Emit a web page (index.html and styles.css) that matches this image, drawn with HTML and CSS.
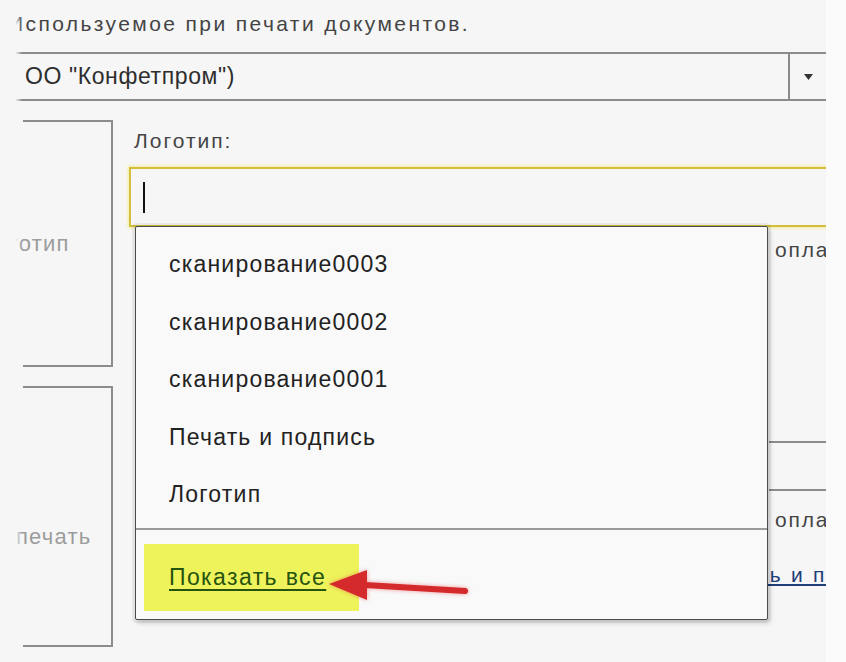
FILE: index.html
```html
<!DOCTYPE html>
<html lang="ru">
<head>
    <meta charset="UTF-8">
    <meta name="viewport" content="width=device-width, initial-scale=1.0">
    <title>Логотип</title>
    <link rel="stylesheet" href="styles.css">
</head>
<body>

    <div class="screen">
        <p class="caption">Используемое при печати документов.</p>

        <div class="select">
            <span class="select-value">ОО "Конфетпром")</span>
            <span class="select-btn">
                <svg width="9" height="6" viewBox="0 0 9 6"><path d="M0 0h9L4.5 6z" fill="#333"/></svg>
            </span>
        </div>

        <div class="main">
            <div class="side">
                <div class="slot slot-logo"><span>Логотип</span></div>
                <div class="slot slot-stamp"><span>печать</span></div>
            </div>

            <div class="form">
                <div class="label">Логотип:</div>
                <div class="field field-active"><span class="caret"></span></div>

                <div class="row row-first">оплаты</div>
                <div class="field field-plain"></div>
                <div class="row">оплаты</div>
                <div class="row row-link"><a href="#">Печать и подпись</a></div>

                <!-- выпадающий список -->
                <div class="popup">
                    <ul class="popup-list">
                        <li>сканирование0003</li>
                        <li>сканирование0002</li>
                        <li>сканирование0001</li>
                        <li>Печать и подпись</li>
                        <li>Логотип</li>
                    </ul>
                    <div class="popup-footer">
                        <div class="mark"><a href="#">Показать все</a></div>
                    </div>
                </div>
            </div>
        </div>

        <div class="fade"></div>

        <svg class="arrow" width="150" height="44" viewBox="0 0 150 44">
            <path d="M38 21 L138 27" stroke="#d52a2c" stroke-width="6" stroke-linecap="round"/>
            <path d="M2 20 L40 6 L40 36 Z" fill="#d52a2c"/>
        </svg>
    </div>

</body>
</html>
```

FILE: styles.css
```css
body {
    margin: 0;
    background: #fbfbfb;
    font-family: "Liberation Sans", Arial, sans-serif;
    overflow: hidden;
}
.screen {
    position: relative;
    width: 826px;
    height: 662px;
    overflow: hidden;
    background: #f6f6f6;
}
.fade {
    position: absolute;
    left: 0;
    top: 0;
    width: 22px;
    height: 662px;
    background: linear-gradient(to right, #f6f6f6 70%, rgba(246, 246, 246, 0));
}
.caption {
    margin: 0;
    padding: 9px 0 0 8px;
    height: 43px;
    font-size: 21px;
    line-height: 30px;
    letter-spacing: 2.4px;
    color: #444;
    white-space: nowrap;
}
.select {
    display: flex;
    margin-left: 15px;
    height: 45px;
    border-top: 2px solid #8c8c8c;
    border-bottom: 2px solid #8c8c8c;
}
.select-value {
    flex: 1;
    padding-left: 10px;
    font-size: 23px;
    line-height: 45px;
    letter-spacing: 0.6px;
    color: #2e2e2e;
}
.select-btn {
    width: 36px;
    border-left: 2px solid #8c8c8c;
    display: flex;
    align-items: center;
    justify-content: center;
}
.main {
    display: flex;
    margin-top: 19px;
}
.side {
    flex: none;
    width: 90px;
    margin-left: 23px;
    margin-right: 16px;
    display: flex;
    flex-direction: column;
    gap: 19px;
}
.slot {
    border: 2px solid #8c8c8c;
    border-left: none;
    display: flex;
    align-items: center;
    font-size: 22px;
    letter-spacing: 1.2px;
    color: #9c9c9c;
    white-space: nowrap;
}
.slot-logo {
    height: 243px;
}
.slot-logo span {
    margin-left: -42px;
}
.slot-stamp {
    height: 217px;
    padding-top: 40px;
}
.slot-stamp span {
    margin-left: -7px;
}
.form {
    position: relative;
    flex: 1;
    min-width: 0;
    white-space: nowrap;
}
.label {
    margin-top: 6px;
    height: 30px;
    padding-left: 5px;
    font-size: 21px;
    line-height: 30px;
    letter-spacing: 2px;
    color: #444;
}
.field {
    width: 760px;
}
.field-active {
    margin-top: 11px;
    height: 56px;
    border: 2px solid #d3bf3c;
    box-shadow: 0 0 3px 1px #f4ec9c;
    display: flex;
    align-items: center;
}
.caret {
    width: 2px;
    height: 31px;
    margin-left: 12px;
    background: #111;
}
.field-plain {
    margin-top: 176px;
    margin-left: 640px;
    width: 120px;
    height: 46px;
    border-top: 2px solid #8c8c8c;
    border-bottom: 2px solid #8c8c8c;
}
.row {
    padding-left: 646px;
    height: 30px;
    font-size: 21px;
    line-height: 30px;
    letter-spacing: 1.8px;
    color: #444;
}
.row-first {
    margin-top: 8px;
}
.field-plain + .row {
    margin-top: 14px;
}
.row-link {
    margin-top: 25px;
    padding-left: 572px;
}
.row-link a {
    color: #1e3f78;
    letter-spacing: 2.2px;
}
.popup {
    position: absolute;
    left: 6px;
    top: 106px;
    width: 631px;
    height: 392px;
    border: 1px solid #4a4a4a;
    border-radius: 2px;
    background: #f9f9f9;
    box-shadow: 0 0 0 3px rgba(0, 0, 0, 0.06), 2px 3px 5px rgba(0, 0, 0, 0.18);
}
.popup-list {
    list-style: none;
    margin: 0;
    padding: 9px 0 4px;
    border-bottom: 2px solid #9a9a9a;
}
.popup-list li {
    height: 57.5px;
    line-height: 57.5px;
    padding-left: 33px;
    font-size: 23px;
    letter-spacing: 1.2px;
    color: #222;
}
.popup-footer {
    padding: 14px 0 0 8px;
}
.mark {
    width: 190px;
    height: 67px;
    padding-left: 25px;
    background: #eef35c;
    display: flex;
    align-items: center;
}
.mark a {
    font-size: 23px;
    letter-spacing: 1.4px;
    color: #26540f;
    text-underline-offset: 4px;
    text-decoration-thickness: 2px;
}
.arrow {
    position: absolute;
    left: 327px;
    top: 564px;
    filter: drop-shadow(0 0 2px rgba(230, 60, 60, 0.5));
}
```
